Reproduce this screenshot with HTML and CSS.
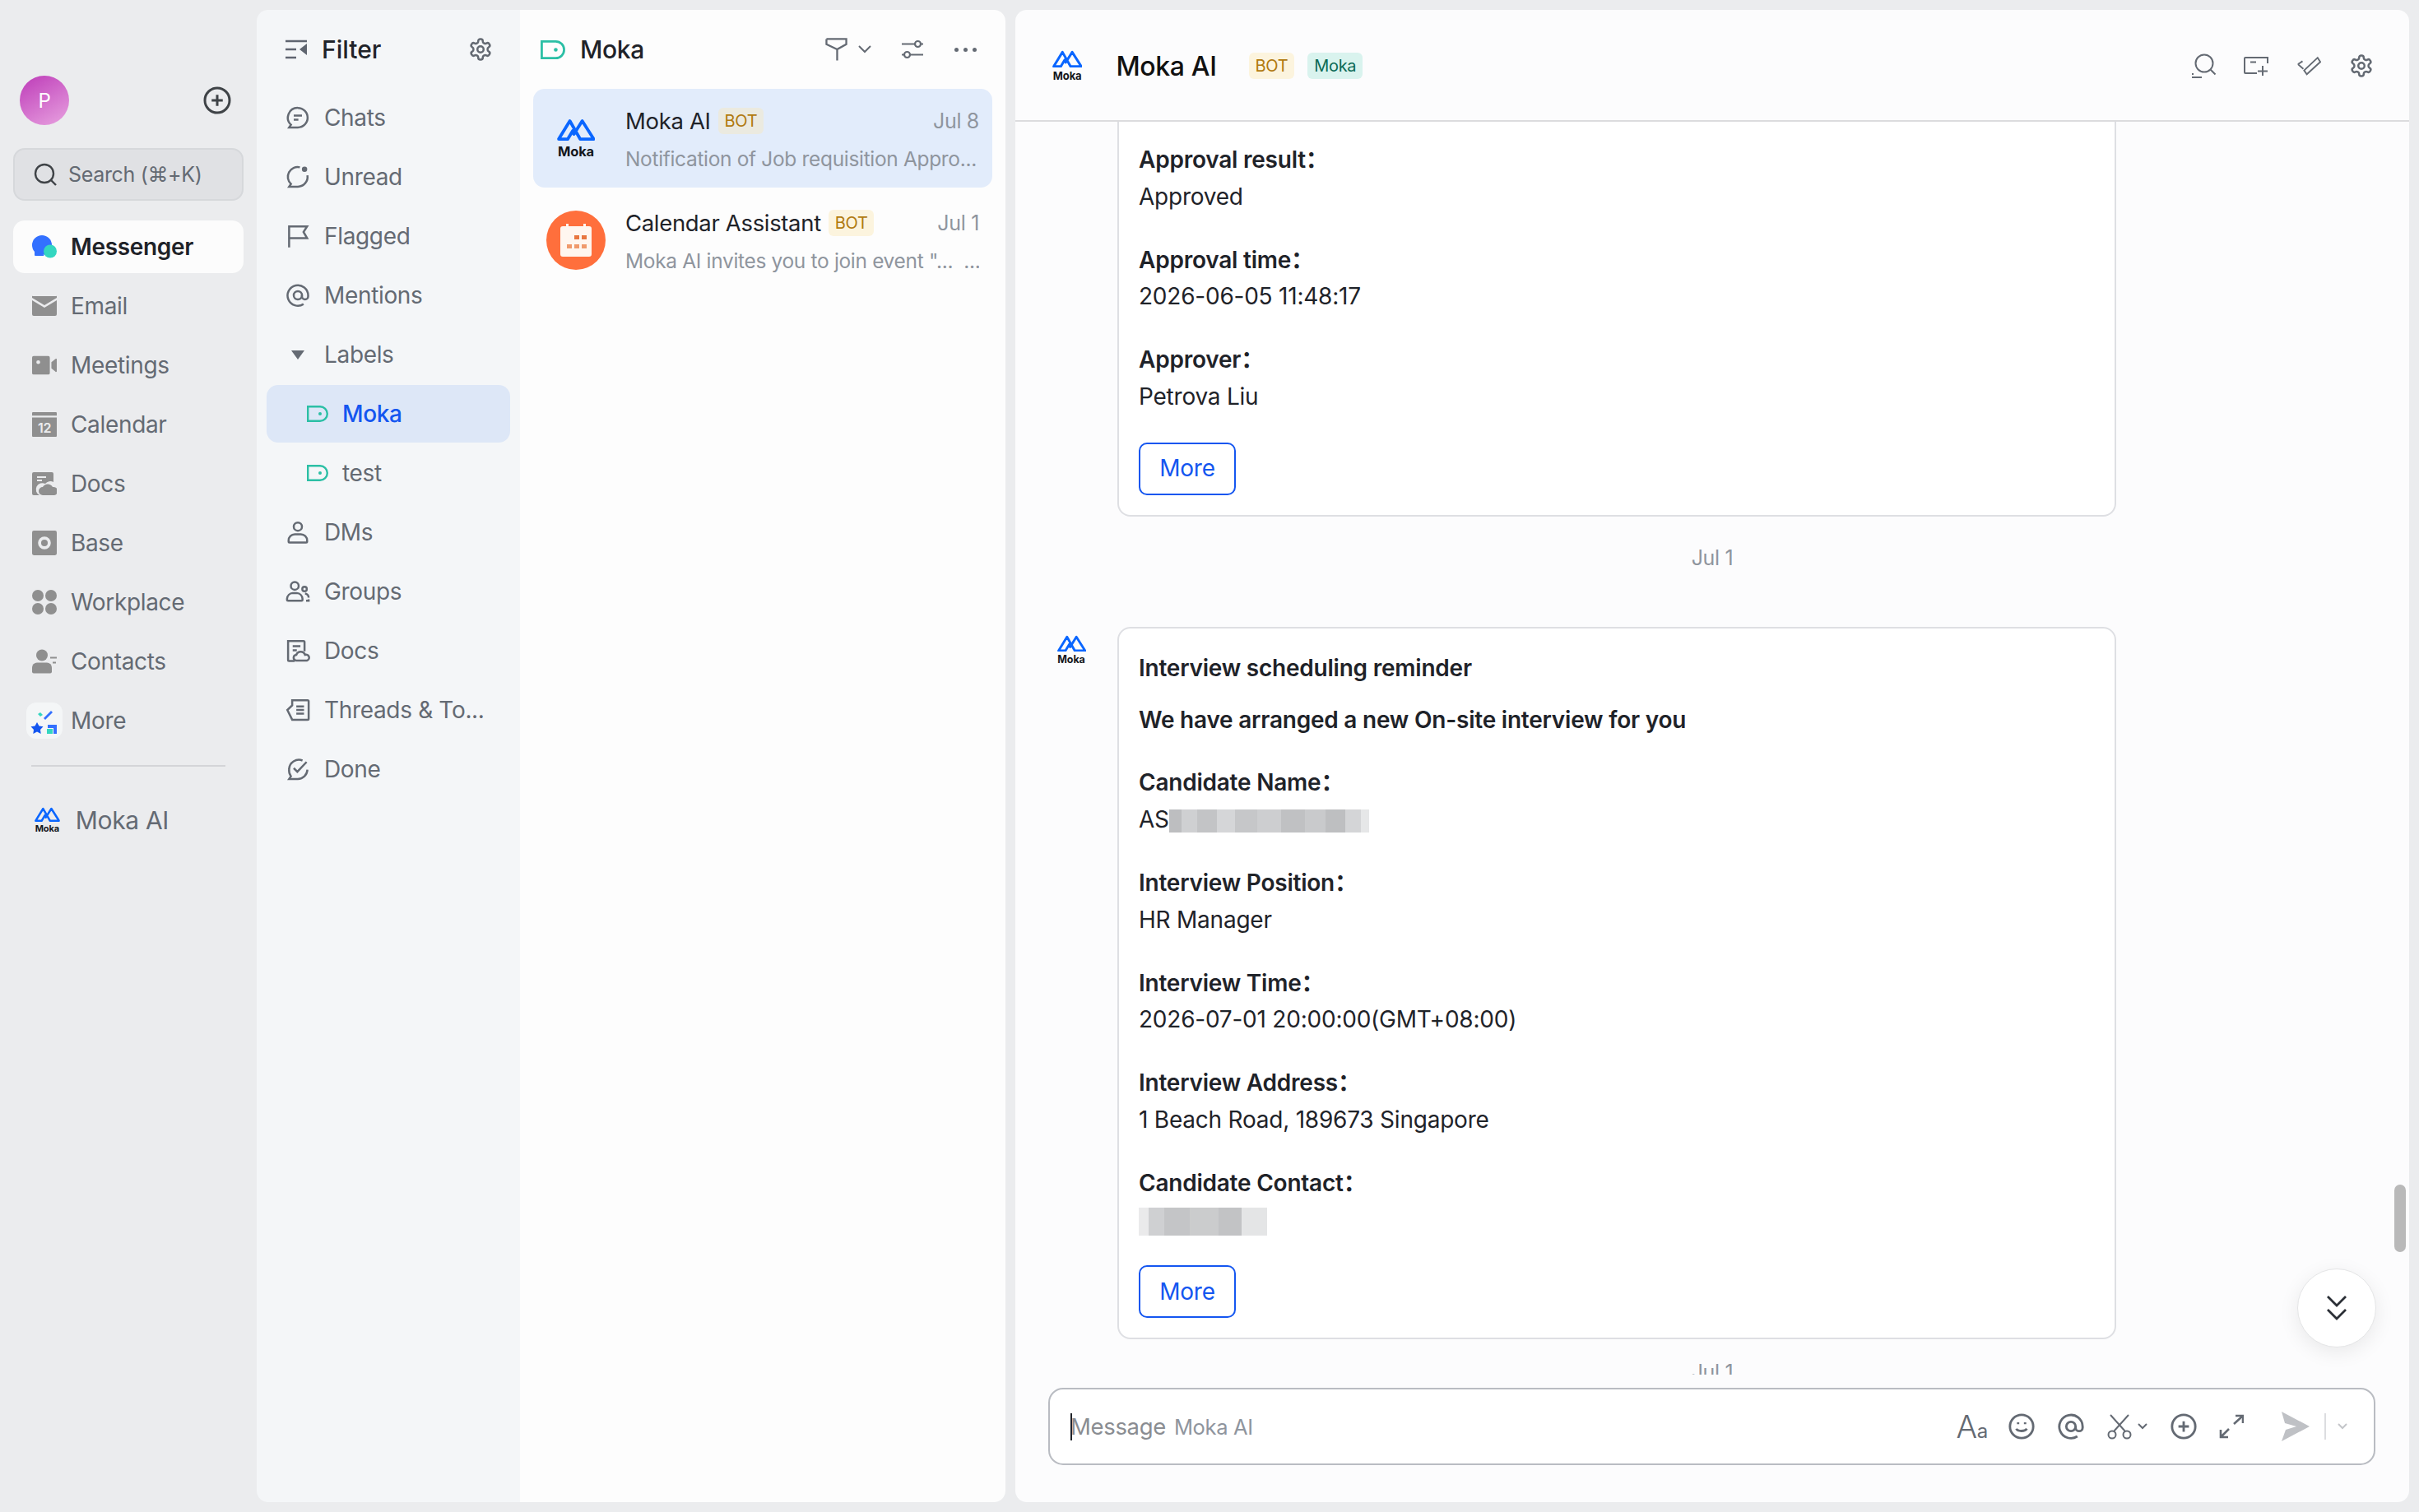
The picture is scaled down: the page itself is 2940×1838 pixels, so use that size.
FILE: index.html
```html
<!DOCTYPE html>
<html lang="en">
<head>
    <meta charset="UTF-8">
    <title>Moka AI - Messenger</title>
    <link rel="stylesheet" href="styles.css">
</head>
<body>
    <!-- icon sprite -->
    <svg class="sprite" xmlns="http://www.w3.org/2000/svg">
        <symbol id="moka" viewBox="0 0 46 27">
            <path d="M13 25H2L15.500 3 28 25H44.500L30.500 3 20.500 19M13 25 19 15" fill="none" stroke="#0a66ff" stroke-width="3.800" stroke-linejoin="round" stroke-linecap="round"/>
        </symbol>
        <symbol id="gear" viewBox="0 0 24 24">
            <path d="M12.22 2h-.44a2 2 0 0 0-2 2v.18a2 2 0 0 1-1 1.73l-.43.25a2 2 0 0 1-2 0l-.15-.08a2 2 0 0 0-2.73.73l-.22.38a2 2 0 0 0 .73 2.73l.15.1a2 2 0 0 1 1 1.72v.51a2 2 0 0 1-1 1.74l-.15.09a2 2 0 0 0-.73 2.73l.22.38a2 2 0 0 0 2.73.73l.15-.08a2 2 0 0 1 2 0l.43.25a2 2 0 0 1 1 1.73V20a2 2 0 0 0 2 2h.44a2 2 0 0 0 2-2v-.18a2 2 0 0 1 1-1.73l.43-.25a2 2 0 0 1 2 0l.15.08a2 2 0 0 0 2.73-.73l.22-.39a2 2 0 0 0-.73-2.73l-.15-.08a2 2 0 0 1-1-1.74v-.5a2 2 0 0 1 1-1.74l.15-.09a2 2 0 0 0 .73-2.73l-.22-.38a2 2 0 0 0-2.73-.73l-.15.08a2 2 0 0 1-2 0l-.43-.25a2 2 0 0 1-1-1.73V4a2 2 0 0 0-2-2z"/>
            <circle cx="12" cy="12" r="3"/>
        </symbol>
        <symbol id="plus-circle" viewBox="0 0 24 24">
            <circle cx="12" cy="12" r="10"/>
            <path d="M12 7.500v9M7.500 12h9"/>
        </symbol>
        <symbol id="tag" viewBox="0 0 26 20">
            <path d="M1.200 1.200H16a8.800 8.800 0 0 1 0 17.600H1.200z" stroke-width="2.400"/>
            <circle cx="16" cy="10" r="2" fill="currentColor" stroke="none"/>
        </symbol>
        <symbol id="chats" viewBox="0 0 24 24">
            <path d="M12 2.500a9.500 9.500 0 1 1 0 19H3.500l1.800-2.600A9.500 9.500 0 0 1 12 2.500z"/>
            <path d="M8 10h8M8 14h4.500"/>
        </symbol>
        <symbol id="unread" viewBox="0 0 24 24">
            <path d="M14 2.700A9.500 9.500 0 0 0 5.300 18.900L3.500 21.500H12a9.500 9.500 0 0 0 9.300-11"/>
            <circle cx="18.500" cy="4.500" r="2.600" fill="currentColor" stroke="none"/>
        </symbol>
        <symbol id="flag" viewBox="0 0 24 24">
            <path d="M3.500 23V2.500h17.500l-3.500 5.500 3.500 6H3.500"/>
        </symbol>
        <symbol id="at" viewBox="0 0 24 24">
            <circle cx="12" cy="12" r="4"/>
            <path d="M16 12v1a3 3 0 0 0 6 0v-1A10 10 0 1 0 17.500 20.500"/>
        </symbol>
        <symbol id="person" viewBox="0 0 24 24">
            <circle cx="12" cy="6.500" r="4"/>
            <path d="M9 14h6a6 6 0 0 1 6 6v1a1 1 0 0 1-1 1H4a1 1 0 0 1-1-1v-1a6 6 0 0 1 6-6z"/>
        </symbol>
        <symbol id="groups" viewBox="0 0 24 24">
            <circle cx="9" cy="6.500" r="3.800"/>
            <circle cx="18.500" cy="9.500" r="2.200"/>
            <path d="M7 13.500h4a6 6 0 0 1 5.500 5.500v1a1 1 0 0 1-1 1H2.500a1 1 0 0 1-1-1v-1a6 6 0 0 1 5.500-5.500zM19 14a4 4 0 0 1 3.500 4M20 21h2.500v-1.500"/>
        </symbol>
        <symbol id="file-cloud" viewBox="0 0 24 24">
            <path d="M9 22H3.500a1 1 0 0 1-1-1V2.500h15a1 1 0 0 1 1 1v9"/>
            <path d="M7 7.500h7.500M7 11.500h4"/>
            <path d="M10 21.500a2.800 2.800 0 0 1 .5-5.500 4.500 4.500 0 0 1 8.500 0 2.800 2.800 0 0 1 2 5.500z"/>
        </symbol>
        <symbol id="threads" viewBox="0 0 24 24">
            <path d="M6.500 2.500h15a1 1 0 0 1 1 1v17a1 1 0 0 1-1 1h-15L1.800 12l4.700-4.500z"/>
            <path d="M10.500 8.500h7.500M10.500 12h7.500M10.500 15.500h7.500"/>
        </symbol>
        <symbol id="done" viewBox="0 0 24 24">
            <path d="M16.500 3.600A9.500 9.500 0 0 0 3.500 12a9.500 9.500 0 0 0 1.800 6.900L3.500 21.500H12a9.500 9.500 0 0 0 9.300-9"/>
            <path d="M8 11l3.500 3.500 9-9.500"/>
        </symbol>
        <symbol id="sliders" viewBox="0 0 28 28">
            <path d="M1 7.500h16M24 7.500h3M1 20.500h3M11 20.500h16"/>
            <circle cx="20.500" cy="7.500" r="3.500"/>
            <circle cx="7.500" cy="20.500" r="3.500"/>
        </symbol>
        <symbol id="funnel" viewBox="0 0 28 30">
            <path d="M1.500 2H26.500V8.500L15 15V29M15 15 1.500 8.500V2"/>
        </symbol>
        <symbol id="chat-search" viewBox="0 0 30 30">
            <circle cx="16" cy="12" r="10.500"/>
            <path d="M23.500 19.500l6 6M1 25h2M1 29h12"/>
        </symbol>
        <symbol id="new-box" viewBox="0 0 30 26">
            <path d="M29 10V3H2a1 1 0 0 0-1 1v17a1 1 0 0 0 1 1h14M8 8.500h7M23 13v12M17 19.500h12"/>
        </symbol>
        <symbol id="pin-check" viewBox="0 0 32 26">
            <path d="M2 11l6-4M2 11l7 6M10 19l3.500 5L31 8l-3.500-5.500z"/>
        </symbol>
        <symbol id="smile" viewBox="0 0 24 24">
            <circle cx="12" cy="12" r="10"/>
            <path d="M7.500 14c1 2.500 7.500 2.500 9 0"/>
            <path d="M9 8.500v1.500M15 8.500v1.500"/>
        </symbol>
        <symbol id="scissors" viewBox="0 0 34 32">
            <circle cx="7" cy="26" r="4.500"/>
            <circle cx="25" cy="26" r="4.500"/>
            <path d="M9 22 27 2M23 22 5 2"/>
        </symbol>
        <symbol id="expand" viewBox="0 0 30 30">
            <path d="M29 11V2H20M29 2 18 12M2 19v9h9M2 28l10-10"/>
        </symbol>
    </svg>

    <div class="app">
        <aside class="rail">
            <div class="rail-top">
                <div class="avatar-p">P</div>
                <svg class="ic-rail-plus"><use href="#plus-circle"/></svg>
            </div>
            <div class="search">
                <svg class="search-ic" viewBox="0 0 28 28"><circle cx="13" cy="13" r="11"/><path d="M21 21l6 6"/></svg>
                <span>Search (⌘+K)</span>
            </div>
            <nav class="rail-nav">
                <a class="rail-item active">
                    <svg class="rail-ic" viewBox="0 0 30 28"><circle cx="12" cy="12" r="12" fill="#3370ff"/><path d="M3 17v7a1 1 0 0 0 1 1h11z" fill="#3370ff"/><circle cx="22" cy="19.500" r="8" fill="#33d6c0"/></svg>
                    Messenger
                </a>
                <a class="rail-item">
                    <svg class="rail-ic" viewBox="0 0 30 24"><path d="M0 2a1 1 0 0 1 1-2h28a1 1 0 0 1 1 2L15 11z"/><path d="M0 5l15 9 15-9v17a2 2 0 0 1-2 2H2a2 2 0 0 1-2-2z"/></svg>
                    Email
                </a>
                <a class="rail-item">
                    <svg class="rail-ic" viewBox="0 0 32 24"><path d="M2 0h19a2 2 0 0 1 2 2v20a2 2 0 0 1-2 2H2a2 2 0 0 1-2-2V2a2 2 0 0 1 2-2zM8 5.500a2.500 2.500 0 1 0 0 5 2.500 2.500 0 0 0 0-5z" fill-rule="evenodd"/><path d="M25 8l5-4a1 1 0 0 1 2 1v14a1 1 0 0 1-2 1l-5-4z"/></svg>
                    Meetings
                </a>
                <a class="rail-item">
                    <svg class="rail-ic" viewBox="0 0 28 28"><path d="M1 0h26a1 1 0 0 1 1 1v3H0V1a1 1 0 0 1 1-1zM0 6h28v21a1 1 0 0 1-1 1H1a1 1 0 0 1-1-1z"/><text x="14" y="23" class="cal-num">12</text></svg>
                    Calendar
                </a>
                <a class="rail-item">
                    <svg class="rail-ic" viewBox="0 0 30 28"><path d="M2 0h22a2 2 0 0 1 2 2v10a8 8 0 0 0-10 2 7 7 0 0 0-7 14H2a2 2 0 0 1-2-2V2a2 2 0 0 1 2-2z"/><path d="M6 6h11M6 10h6" stroke="#ebecee" stroke-width="2"/><path d="M13 28a5 5 0 0 1 0-10 7 7 0 0 1 12 0 5 5 0 0 1 2 10z"/></svg>
                    Docs
                </a>
                <a class="rail-item">
                    <svg class="rail-ic" viewBox="0 0 28 28"><rect width="28" height="28" rx="2"/><circle cx="14" cy="14" r="5.500" fill="none" stroke="#ebecee" stroke-width="3.500"/></svg>
                    Base
                </a>
                <a class="rail-item">
                    <svg class="rail-ic" viewBox="0 0 30 30"><circle cx="7" cy="7" r="7"/><circle cx="23" cy="7" r="7"/><circle cx="7" cy="23" r="7"/><circle cx="23" cy="23" r="7"/></svg>
                    Workplace
                </a>
                <a class="rail-item">
                    <svg class="rail-ic" viewBox="0 0 30 29"><circle cx="12" cy="7" r="7"/><path d="M6 16h12a6 6 0 0 1 6 6v5a2 2 0 0 1-2 2H2a2 2 0 0 1-2-2v-5a6 6 0 0 1 6-6z"/><path d="M22 9h8v2h-8zM25 15h4v2h-4z"/></svg>
                    Contacts
                </a>
                <a class="rail-item">
                    <span class="more-box">
                        <svg viewBox="0 0 32 32" width="32" height="32"><path d="M15 13l9-9 2 2-9 9z" fill="#3370ff"/><path d="M8 8l3-2 3 3-3 2z" fill="#33d6c0"/><path d="M7 18l2.500 4.500 5 .8-3.500 3.600.7 5-4.700-2.300-4.700 2.300.7-5L-.5 23.300l5-.8z" fill="#1456f0"/><path d="M20 21h11v11h-4v-7h-7z" fill="#3370ff"/><path d="M19 26h7v6h-7z" fill="#33d6c0"/></svg>
                    </span>
                    More
                </a>
            </nav>
            <div class="rail-divider"></div>
            <a class="rail-pinned">
                <span class="logo logo-rail"><svg><use href="#moka"/></svg><b>Moka</b></span>
                Moka AI
            </a>
        </aside>

        <div class="side-panels">
            <section class="filter">
                <header class="filter-head">
                    <svg class="filter-ic" viewBox="0 0 26 24"><path d="M0 2h26M0 12h13M0 22h13" fill="none" stroke="currentColor" stroke-width="2.400"/><path d="M26 5v14l-9-7z" fill="currentColor"/></svg>
                    <h1>Filter</h1>
                    <svg class="ic ic-gear"><use href="#gear"/></svg>
                </header>
                <a class="filter-item"><svg class="ic"><use href="#chats"/></svg>Chats</a>
                <a class="filter-item"><svg class="ic"><use href="#unread"/></svg>Unread</a>
                <a class="filter-item"><svg class="ic"><use href="#flag"/></svg>Flagged</a>
                <a class="filter-item"><svg class="ic"><use href="#at"/></svg>Mentions</a>
                <a class="filter-item"><span class="caret"></span>Labels</a>
                <a class="filter-item sub selected"><svg class="ic-tag"><use href="#tag"/></svg>Moka</a>
                <a class="filter-item sub"><svg class="ic-tag"><use href="#tag"/></svg>test</a>
                <a class="filter-item"><svg class="ic"><use href="#person"/></svg>DMs</a>
                <a class="filter-item"><svg class="ic"><use href="#groups"/></svg>Groups</a>
                <a class="filter-item"><svg class="ic"><use href="#file-cloud"/></svg>Docs</a>
                <a class="filter-item"><svg class="ic"><use href="#threads"/></svg>Threads &amp; To...</a>
                <a class="filter-item"><svg class="ic"><use href="#done"/></svg>Done</a>
            </section>

            <section class="list">
                <header class="list-head">
                    <svg class="ic-tag"><use href="#tag"/></svg>
                    <h2>Moka</h2>
                    <div class="list-tools">
                        <svg class="ic-funnel"><use href="#funnel"/></svg>
                        <svg class="ic-chev" viewBox="0 0 16 10"><path d="M1 1l7 7 7-7"/></svg>
                        <svg class="ic-sliders"><use href="#sliders"/></svg>
                        <span class="dots"><i></i><i></i><i></i></span>
                    </div>
                </header>
                <article class="chat-row selected">
                    <div class="row-avatar"><span class="logo logo-list"><svg><use href="#moka"/></svg><b>Moka</b></span></div>
                    <div class="row-body">
                        <div class="row-top">
                            <span class="row-name">Moka AI</span>
                            <span class="badge badge-bot badge-dim">BOT</span>
                            <time>Jul 8</time>
                        </div>
                        <p class="row-sub">Notification of Job requisition Appro...</p>
                    </div>
                </article>
                <article class="chat-row">
                    <div class="row-avatar cal-avatar">
                        <svg viewBox="0 0 40 40" width="40" height="40"><path d="M4 3h4V0h3v3h18V0h3v3h4a3 3 0 0 1 3 3v31a3 3 0 0 1-3 3H4a3 3 0 0 1-3-3V6a3 3 0 0 1 3-3z" fill="#fff6ef"/><path d="M18 14h6v5h-6zM27 14h6v5h-6z" fill="#e8763f"/><path d="M9 25h6v5H9zM18 25h6v5h-6zM27 25h6v5h-6z" fill="#f09a6c"/></svg>
                    </div>
                    <div class="row-body">
                        <div class="row-top">
                            <span class="row-name">Calendar Assistant</span>
                            <span class="badge badge-bot">BOT</span>
                            <time>Jul 1</time>
                        </div>
                        <p class="row-sub">Moka AI invites you to join event "...  ...</p>
                    </div>
                </article>
            </section>
        </div>

        <main class="chat">
            <header class="chat-head">
                <span class="logo logo-head"><svg><use href="#moka"/></svg><b>Moka</b></span>
                <h2>Moka AI</h2>
                <span class="badge badge-bot">BOT</span>
                <span class="badge badge-org">Moka</span>
                <div class="chat-tools">
                    <svg class="ic-head"><use href="#chat-search"/></svg>
                    <svg class="ic-head"><use href="#new-box"/></svg>
                    <svg class="ic-head"><use href="#pin-check"/></svg>
                    <svg class="ic-head"><use href="#gear"/></svg>
                </div>
            </header>

            <div class="messages">
                <div class="msg">
                    <div class="msg-avatar"></div>
                    <div class="card card-cut">
                        <div class="field"><strong>Approval result：</strong><span>Approved</span></div>
                        <div class="field"><strong>Approval time：</strong><span>2026-06-05 11:48:17</span></div>
                        <div class="field"><strong>Approver：</strong><span>Petrova Liu</span></div>
                        <button class="more-btn">More</button>
                    </div>
                </div>
                <div class="day">Jul 1</div>
                <div class="msg">
                    <div class="msg-avatar"><span class="logo logo-msg"><svg><use href="#moka"/></svg><b>Moka</b></span></div>
                    <div class="card">
                        <p class="card-title">Interview scheduling reminder</p>
                        <p class="card-title second">We have arranged a new On-site interview for you</p>
                        <div class="field"><strong>Candidate Name：</strong><span>AS<i class="mosaic mosaic-name"></i></span></div>
                        <div class="field"><strong>Interview Position：</strong><span>HR Manager</span></div>
                        <div class="field"><strong>Interview Time：</strong><span>2026-07-01 20:00:00(GMT+08:00)</span></div>
                        <div class="field"><strong>Interview Address：</strong><span>1 Beach Road, 189673 Singapore</span></div>
                        <div class="field"><strong>Candidate Contact：</strong><span><i class="mosaic mosaic-contact"></i></span></div>
                        <button class="more-btn">More</button>
                    </div>
                </div>
                <div class="day day-last">Jul 1</div>
            </div>

            <div class="scroll-thumb"></div>
            <button class="jump">
                <svg viewBox="0 0 26 32" width="26" height="32"><path d="M2 2l11 11L24 2M2 18l11 11 11-11"/></svg>
            </button>

            <div class="composer">
                <span class="caret-line"></span>
                <span class="ph">Message</span>
                <span class="ph-name">Moka AI</span>
                <div class="composer-tools">
                    <span class="aa">A<small>a</small></span>
                    <svg class="ic-tool"><use href="#smile"/></svg>
                    <svg class="ic-tool"><use href="#at"/></svg>
                    <span class="cut">
                        <svg class="ic-tool"><use href="#scissors"/></svg>
                        <svg class="ic-mini" viewBox="0 0 12 8"><path d="M1 1l5 5 5-5"/></svg>
                    </span>
                    <svg class="ic-tool"><use href="#plus-circle"/></svg>
                    <svg class="ic-expand"><use href="#expand"/></svg>
                    <svg class="ic-send" viewBox="0 0 34 36"><path d="M0 0 34 18 0 36 5 22 18 18 4 14z"/></svg>
                    <span class="send-div"></span>
                    <svg class="ic-mini light" viewBox="0 0 12 8"><path d="M1 1l5 5 5-5"/></svg>
                </div>
            </div>
        </main>
    </div>
</body>
</html>
```

FILE: styles.css
```css
* {
    box-sizing: border-box;
}
html, body {
    height: 100%;
}
body {
    margin: 0;
    background-color: #ebecee;
    font-family: Inter, "Noto Sans CJK SC", sans-serif;
    font-size: 28px;
    letter-spacing: -0.012em;
    color: #1f2329;
    overflow: hidden;
}
h1, h2, p {
    margin: 0;
    font: inherit;
}
.sprite {
    position: absolute;
    width: 0;
    height: 0;
}
.app {
    display: flex;
    height: 1838px;
    padding: 12px 12px 12px 0;
}

/* left rail */
.rail {
    width: 312px;
    flex: none;
    padding: 80px 16px 0;
    color: #646a73;
}
.rail-top {
    display: flex;
    align-items: center;
    justify-content: space-between;
    height: 60px;
    padding: 0 14px 0 8px;
}
.avatar-p {
    width: 60px;
    height: 60px;
    border-radius: 50%;
    background: linear-gradient(150deg, #bd3bb8, #e8a2e0);
    color: #fff;
    font-size: 24px;
    display: flex;
    align-items: center;
    justify-content: center;
}
.ic-rail-plus {
    width: 36px;
    height: 36px;
    fill: none;
    stroke: #3f4347;
    stroke-width: 2;
}
.search {
    display: flex;
    align-items: center;
    gap: 14px;
    height: 64px;
    margin-top: 28px;
    padding-left: 23px;
    background-color: #e0e1e4;
    border: 2px solid #d6d8db;
    border-radius: 14px;
    font-size: 25px;
}
.search-ic {
    width: 28px;
    height: 28px;
    fill: none;
    stroke: #3f4347;
    stroke-width: 2.400;
}
.rail-nav {
    display: flex;
    flex-direction: column;
    gap: 8px;
    margin-top: 24px;
}
.rail-item {
    display: flex;
    align-items: center;
    gap: 17px;
    height: 64px;
    padding-left: 23px;
}
.rail-item.active {
    background-color: #fcfcfc;
    border-radius: 14px;
    color: #1f2329;
    font-weight: 600;
}
.rail-ic {
    width: 30px;
    height: 30px;
    flex: none;
    fill: #8f8f8f;
}
.cal-num {
    fill: #ebecee;
    font-size: 15px;
    font-weight: 600;
    text-anchor: middle;
}
.more-box {
    display: flex;
    align-items: center;
    justify-content: center;
    width: 44px;
    height: 44px;
    margin-left: -7px;
    margin-right: -7px;
    background-color: #f4f6f7;
    border-radius: 12px;
}
.more-box svg {
    overflow: visible;
}
.rail-divider {
    height: 2px;
    margin: 22px 22px 0;
    background-color: #d4d5d8;
}
.rail-pinned {
    display: flex;
    align-items: center;
    gap: 19px;
    height: 64px;
    margin-top: 33px;
    padding-left: 26px;
    font-size: 30px;
}

/* moka logo, sized by its font-size */
.logo {
    display: flex;
    flex-direction: column;
    align-items: center;
    flex: none;
    line-height: 1;
    color: #14171c;
}
.logo svg {
    width: 2.800em;
    height: 1.640em;
    display: block;
}
.logo b {
    font-weight: 700;
    letter-spacing: -.01em;
    margin-top: .3em;
}
.logo-rail { font-size: 11px; }
.logo-list { font-size: 16.500px; }
.logo-head { font-size: 13px; }
.logo-msg { font-size: 12.500px; }

/* filter + list */
.side-panels {
    display: flex;
    width: 910px;
    flex: none;
    margin-right: 12px;
    border-radius: 14px;
    overflow: hidden;
}
.filter {
    width: 320px;
    flex: none;
    padding: 0 12px;
    background-color: #f4f6f8;
}
.filter-head {
    display: flex;
    align-items: center;
    height: 96px;
    padding: 0 21px 0 23px;
}
.filter-ic {
    width: 26px;
    height: 24px;
    color: #5f6570;
}
.filter-head h1 {
    flex: 1;
    margin-left: 18px;
    font-size: 30px;
    font-weight: 500;
    letter-spacing: 0;
}
.ic {
    width: 30px;
    height: 30px;
    flex: none;
    fill: none;
    stroke: currentColor;
    stroke-width: 2;
}
.ic-gear {
    color: #646a73;
}
.filter-item {
    display: flex;
    align-items: center;
    gap: 17px;
    height: 70px;
    margin-bottom: 2px;
    padding-left: 23px;
    border-radius: 14px;
    color: #646a73;
}
.filter-item.sub {
    padding-left: 49px;
}
.filter-item.selected {
    background-color: #dde7f7;
    color: #1456f0;
    font-weight: 500;
}
.caret {
    width: 30px;
    display: flex;
    justify-content: center;
}
.caret::before {
    content: "";
    border-left: 8px solid transparent;
    border-right: 8px solid transparent;
    border-top: 11px solid #646a73;
}
.ic-tag {
    width: 26px;
    height: 20px;
    flex: none;
    fill: none;
    stroke: #2bbfa5;
    color: #2bbfa5;
}

/* chat list */
.list {
    flex: 1;
    min-width: 0;
    padding: 0 16px;
    background-color: #fdfdfd;
}
.list-head {
    display: flex;
    align-items: center;
    height: 96px;
    padding-left: 9px;
}
.list-head .ic-tag {
    width: 30px;
    height: 23px;
}
.list-head h2 {
    flex: 1;
    margin-left: 18px;
    font-size: 30px;
    font-weight: 500;
}
.list-tools {
    display: flex;
    align-items: center;
    color: #646a73;
    padding-right: 19px;
}
.ic-funnel {
    width: 27px;
    height: 30px;
    fill: none;
    stroke: currentColor;
    stroke-width: 2.400;
}
.ic-chev {
    width: 16px;
    height: 10px;
    margin-left: 13px;
    fill: none;
    stroke: currentColor;
    stroke-width: 2;
}
.ic-sliders {
    width: 28px;
    height: 28px;
    margin-left: 36px;
    fill: none;
    stroke: currentColor;
    stroke-width: 2.200;
}
.dots {
    display: flex;
    gap: 6px;
    margin-left: 37px;
}
.dots i {
    width: 5px;
    height: 5px;
    border-radius: 50%;
    background-color: currentColor;
}
.chat-row {
    display: flex;
    align-items: center;
    gap: 24px;
    height: 120px;
    margin-bottom: 4px;
    padding: 0 16px;
    border-radius: 14px;
}
.chat-row.selected {
    background-color: #e2ecfb;
}
.row-avatar {
    width: 72px;
    height: 72px;
    flex: none;
    display: flex;
    align-items: center;
    justify-content: center;
    border-radius: 50%;
}
.cal-avatar {
    background-color: #ff6f3c;
}
.row-body {
    flex: 1;
    min-width: 0;
    padding-top: 3px;
}
.row-top {
    display: flex;
    align-items: center;
    gap: 9px;
    height: 32px;
}
.row-name {
    font-size: 27.500px;
}
.row-top time {
    margin-left: auto;
    color: #8f959e;
    font-size: 25px;
}
.row-sub {
    margin-top: 14px;
    height: 32px;
    line-height: 32px;
    font-size: 24.500px;
    color: #8f959e;
    white-space: pre;
    overflow: hidden;
}
.badge {
    display: inline-flex;
    align-items: center;
    height: 32px;
    padding: 0 8px;
    border-radius: 6px;
    font-size: 20px;
}
.badge-bot {
    background-color: #fcf4de;
    color: #b17a10;
}
.badge-dim {
    background-color: #ebeae0;
}
.badge-org {
    background-color: #d9f3ee;
    color: #0a6a55;
}

/* conversation */
.chat {
    position: relative;
    flex: 1;
    display: flex;
    flex-direction: column;
    border-radius: 14px;
    background-color: #fcfcfd;
    overflow: hidden;
}
.chat-head {
    display: flex;
    align-items: center;
    height: 136px;
    flex: none;
    padding: 2px 43px 0 45px;
    border-bottom: 2px solid #dcdcde;
}
.chat-head h2 {
    margin: 0 39px 0 41px;
    font-size: 32px;
    font-weight: 500;
    color: #111;
}
.chat-head .badge {
    margin-right: 16px;
}
.chat-tools {
    display: flex;
    align-items: center;
    gap: 34px;
    margin-left: auto;
}
.ic-head {
    width: 30px;
    height: 30px;
    fill: none;
    stroke: #646a73;
    stroke-width: 2;
}
.messages {
    flex: 1;
    min-height: 0;
    overflow: hidden;
}
.msg {
    display: flex;
    padding-left: 50px;
}
.msg-avatar {
    width: 36px;
    flex: none;
    margin-right: 38px;
    padding-top: 10px;
}
.card {
    width: 1214px;
    padding: 26px 24px 24px;
    background-color: #fff;
    border: 2px solid #dedfe3;
    border-radius: 16px;
    line-height: 44.800px;
    letter-spacing: -0.008em;
}
.card-cut {
    padding-top: 24px;
    border-top: 0;
    border-top-left-radius: 0;
    border-top-right-radius: 0;
}
.card-title {
    font-weight: 600;
}
.card-title.second {
    margin-top: 18px;
}
.field {
    margin-top: 32px;
}
.card-cut .field:first-child {
    margin-top: 0;
}
.field strong {
    display: block;
    font-weight: 600;
}
.field span {
    display: block;
    height: 44.800px;
}
.mosaic {
    display: inline-block;
    vertical-align: middle;
    background-color: #cfd0d2;
}
.mosaic-name {
    width: 243px;
    height: 28px;
    margin-top: -2px;
    background: linear-gradient(90deg, #bdbec0 0 6%, #cfd0d2 6% 14%, #c3c4c6 14% 24%, #d5d6d8 24% 33%, #c6c7c9 33% 44%, #cdced0 44% 56%, #c0c1c3 56% 68%, #c9cacc 68% 78%, #bebfc1 78% 88%, #d4d5d7 88% 96%, #e6e7e8 96%);
}
.mosaic-contact {
    width: 156px;
    height: 34px;
    background: linear-gradient(90deg, #eaeaeb 0 8%, #cfd0d2 8% 20%, #c4c5c7 20% 40%, #cbcccd 40% 62%, #c2c3c5 62% 80%, #e4e5e6 80%);
}
.more-btn {
    display: block;
    width: 118px;
    height: 64px;
    margin-top: 33px;
    border: 2px solid #1456f0;
    border-radius: 10px;
    background-color: #fff;
    color: #1456f0;
    font: inherit;
    letter-spacing: inherit;
}
.day {
    height: 40px;
    margin: 30px 0 64px;
    line-height: 40px;
    text-align: center;
    font-size: 25px;
    color: #8f959e;
}
.day-last {
    margin-top: 20px;
    margin-bottom: 0;
}
.scroll-thumb {
    position: absolute;
    right: 4px;
    top: 1428px;
    width: 14px;
    height: 82px;
    border-radius: 7px;
    background-color: #b9b9b9;
}
.jump {
    position: absolute;
    right: 40px;
    top: 1530px;
    width: 96px;
    height: 96px;
    padding: 0;
    border: 1px solid #e4e5e6;
    border-radius: 50%;
    background-color: #fff;
    box-shadow: 0 6px 24px rgba(0, 0, 0, 0.08);
    display: flex;
    align-items: center;
    justify-content: center;
}
.jump svg {
    fill: none;
    stroke: #2b2f36;
    stroke-width: 2.800;
}
.composer {
    display: flex;
    align-items: center;
    height: 94px;
    flex: none;
    margin: 16px 41px 45px 40px;
    padding: 0 32px 0 25px;
    background-color: #fff;
    border: 2px solid #b9bcc2;
    border-radius: 18px;
    color: #8f959e;
}
.caret-line {
    width: 2px;
    height: 33px;
    background-color: #1f2329;
}
.ph {
    margin-left: -2px;
    font-size: 27.500px;
    color: #8a8d92;
}
.ph-name {
    margin-left: 10px;
    font-size: 25.500px;
}
.composer-tools {
    display: flex;
    align-items: center;
    margin-left: auto;
    color: #646a73;
}
.aa {
    font-size: 38px;
    font-weight: 300;
    line-height: 1;
    margin-right: 24px;
}
.aa small {
    font-size: 24px;
    font-weight: 400;
}
.ic-tool {
    width: 34px;
    height: 34px;
    margin-right: 26px;
    fill: none;
    stroke: currentColor;
    stroke-width: 2;
}
.cut {
    display: flex;
    align-items: center;
}
.cut .ic-tool {
    margin-right: 4px;
}
.cut .ic-mini {
    margin-right: 27px;
}
.ic-mini {
    width: 12px;
    height: 8px;
    fill: none;
    stroke: currentColor;
    stroke-width: 2;
}
.ic-mini.light {
    stroke: #c4c6ca;
}
.ic-expand {
    width: 30px;
    height: 30px;
    margin-right: 46px;
    fill: none;
    stroke: currentColor;
    stroke-width: 2.600;
}
.ic-send {
    width: 34px;
    height: 36px;
    fill: #bfc1c5;
}
.send-div {
    width: 2px;
    height: 32px;
    margin: 0 14px 0 18px;
    background-color: #dcdde0;
}
```
